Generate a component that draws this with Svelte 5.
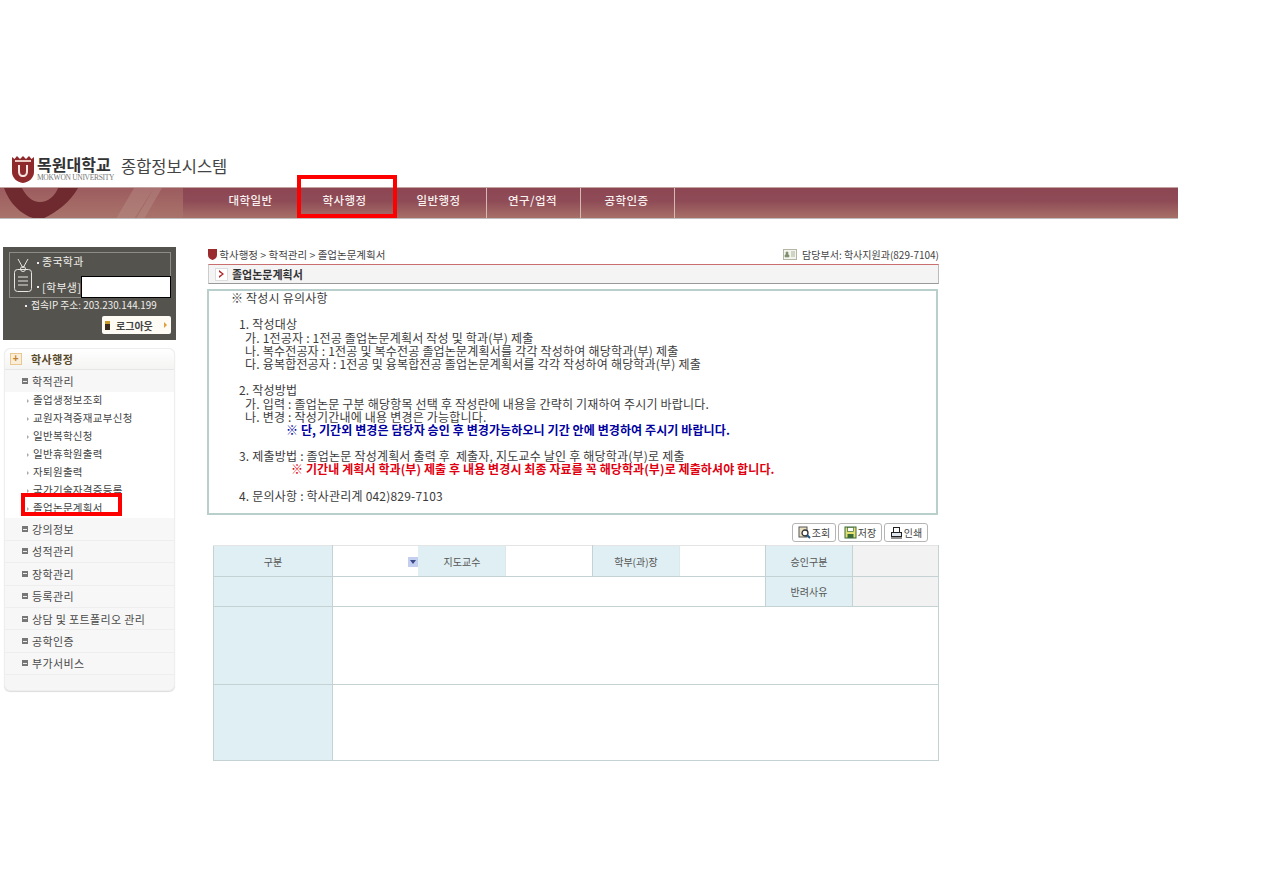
<script>
  const navItems = ['대학일반', '학사행정', '일반행정', '연구/업적', '공학인증'];
  const subMenu = ['졸업생정보조회', '교원자격증재교부신청', '일반복학신청', '일반휴학원출력', '자퇴원출력', '국가기술자격증등록', '졸업논문계획서'];
  const moreMenu = ['강의정보', '성적관리', '장학관리', '등록관리', '상담 및 포트폴리오 관리', '공학인증', '부가서비스'];

  // 안내문 한 줄씩, 빈 줄 포함
  const notice = [
    { t: '※ 작성시 유의사항', c: 'l0' },
    { t: '' },
    { t: '1. 작성대상', c: 'l1' },
    { t: '가. 1전공자 : 1전공 졸업논문계획서 작성 및 학과(부) 제출', c: 'l2' },
    { t: '나. 복수전공자 : 1전공 및 복수전공 졸업논문계획서를 각각 작성하여 해당학과(부) 제출', c: 'l2' },
    { t: '다. 융복합전공자 : 1전공 및 융복합전공 졸업논문계획서를 각각 작성하여 해당학과(부) 제출', c: 'l2' },
    { t: '' },
    { t: '2. 작성방법', c: 'l1' },
    { t: '가. 입력 : 졸업논문 구분 해당항목 선택 후 작성란에 내용을 간략히 기재하여 주시기 바랍니다.', c: 'l2' },
    { t: '나. 변경 : 작성기간내에 내용 변경은 가능합니다.', c: 'l2' },
    { t: '※ 단, 기간외 변경은 담당자 승인 후 변경가능하오니 기간 안에 변경하여 주시기 바랍니다.', c: 'blue' },
    { t: '' },
    { t: '3. 제출방법 : 졸업논문 작성계획서 출력 후  제출자, 지도교수 날인 후 해당학과(부)로 제출', c: 'l1' },
    { t: '※ 기간내 계획서 학과(부) 제출 후 내용 변경시 최종 자료를 꼭 해당학과(부)로 제출하셔야 합니다.', c: 'red' },
    { t: '' },
    { t: '4. 문의사항 : 학사관리계 042)829-7103', c: 'l1' }
  ];
</script>

<div class="page">
  <header class="logo">
    <svg class="emblem" width="22" height="27" viewBox="0 0 22 27">
      <path d="M0 1l2.500 2L5 0l3 3 3-3 3 3 3-3 2.500 3L22 1v15c0 6-5 10-11 11C5 26 0 22 0 16z" fill="#8f2a2c" />
      <path d="M3 4h16v2H3z" fill="#e8c8c0" />
      <path d="M6 9v6c0 4 2 6 5 6s5-2 5-6V9h-2v6c0 3-1 4-3 4s-3-1-3-4V9z" fill="#f3e4e0" />
    </svg>
    <div class="school">
      <strong>목원대학교</strong>
      <span>MOKWON UNIVERSITY</span>
    </div>
    <div class="system">종합정보시스템</div>
  </header>

  <nav class="nav">
    <div class="nav-left">
      <svg width="183" height="31" viewBox="0 0 183 31">
        <path d="M0 0h183v31H0z" fill="#a3685f" opacity=".35" />
        <path d="M4 0c6 18 22 30 34 31h4c12-5 28-16 36-31H58c-3 8-10 14-18 14S26 8 22 0z" fill="#6f2a30" />
        <path d="M116 31l18-31h20l-20 31zM136 31l18-31h8l-18 31z" fill="#b98f88" opacity=".45" />
      </svg>
    </div>
    <ul>
      {#each navItems as item, i}
        <li class:sep={i > 1}>{item}</li>
      {/each}
    </ul>
  </nav>

  <div class="body">
    <aside class="side">
      <section class="userbox">
        <div class="userinner">
          <svg class="badge" width="20" height="35" viewBox="0 0 20 35" fill="none" stroke="#e6e6e2">
            <path d="M5 1l5 9 5-9" />
            <circle cx="10" cy="11" r="2.500" />
            <rect x="1.500" y="11.500" width="17" height="22" rx="3" />
            <path d="M5 19h10M5 23h10M5 27h10" />
          </svg>
          <div class="userlines">
            <div>종국학과</div>
            <div class="userrow">[학부생]<span class="mask"></span></div>
          </div>
        </div>
        <div class="ip">접속IP 주소: 203.230.144.199</div>
        <div class="logout-wrap">
          <button class="logout"><i></i>로그아웃<b></b></button>
        </div>
      </section>

      <section class="menu">
        <h3>
          <span class="plus">+</span>학사행정
        </h3>
        <div class="item open"><i></i>학적관리</div>
        <ul>
          {#each subMenu as s}
            <li>{s}</li>
          {/each}
        </ul>
        {#each moreMenu as m}
          <div class="item"><i></i>{m}</div>
        {/each}
      </section>
    </aside>

    <main class="content">
      <div class="crumbs">
        <div class="path">
          <svg width="9" height="11" viewBox="0 0 9 11"><path d="M0 0h9v6c0 3-2 4-4.500 5C2 10 0 9 0 6z" fill="#9a2b2e" /></svg>
          학사행정 &gt; 학적관리 &gt; 졸업논문계획서
        </div>
        <div class="owner">
          <svg width="14" height="11" viewBox="0 0 14 11">
            <rect x=".5" y=".5" width="13" height="10" fill="#f4f4ee" stroke="#b5b5a5" />
            <path d="M2 8h4V6H5V3H3v3H2zM8 3h4M8 5h4M8 7h4" fill="#7a8a6a" stroke="#8a9a7a" stroke-width=".7" />
          </svg>
          담당부서: 학사지원과(829-7104)
        </div>
      </div>

      <div class="title">
        <span class="arrow">
          <svg width="7" height="8" viewBox="0 0 7 8"><path d="M1 0l5 4-5 4V6l3-2-3-2z" fill="#b02a2a" /></svg>
        </span>
        졸업논문계획서
      </div>

      <div class="notice">
        {#each notice as line}
          <div class="line {line.c ?? ''}">{line.t}</div>
        {/each}
      </div>

      <div class="buttons">
        <button>
          <svg width="13" height="13" viewBox="0 0 13 13" fill="none">
            <rect x="1" y="1" width="8" height="10" fill="#e8dfc0" stroke="#555" />
            <circle cx="7" cy="7" r="3" fill="#fff" stroke="#333" stroke-width="1.300" />
            <path d="M9 9l3 3" stroke="#1a5a8a" stroke-width="2" />
          </svg>조회
        </button>
        <button>
          <svg width="13" height="13" viewBox="0 0 13 13">
            <rect x="1" y="1" width="11" height="11" fill="#e3e070" stroke="#3a6a3a" />
            <rect x="3.500" y="1.500" width="6" height="4" fill="#fff" stroke="#3a6a3a" stroke-width=".7" />
            <rect x="3.500" y="8" width="6" height="4" fill="#3a6a3a" />
          </svg>저장
        </button>
        <button>
          <svg width="13" height="13" viewBox="0 0 13 13" fill="none" stroke="#222">
            <rect x="3.500" y="1.500" width="6" height="5" />
            <rect x="1.500" y="6.500" width="10" height="4" fill="#dfe6ee" />
            <path d="M1 12h11" />
          </svg>인쇄
        </button>
      </div>

      <table>
        <colgroup>
          <col class="c1" /><col class="c2" /><col class="c3" /><col class="c4" />
          <col class="c5" /><col class="c6" /><col class="c7" /><col class="c8" />
        </colgroup>
        <tbody>
          <tr class="r1">
            <th>구분</th>
            <td class="select"><span class="drop"></span></td>
            <th class="plain">지도교수</th>
            <td></td>
            <th class="plain">학부(과)장</th>
            <td></td>
            <th>승인구분</th>
            <td class="gray"></td>
          </tr>
          <tr class="r2">
            <th></th>
            <td colspan="5"></td>
            <th>반려사유</th>
            <td class="gray"></td>
          </tr>
          <tr class="r3">
            <th></th>
            <td colspan="7"></td>
          </tr>
          <tr class="r4">
            <th></th>
            <td colspan="7"></td>
          </tr>
        </tbody>
      </table>
    </main>
  </div>

  <!-- 캡처에 덧그려진 빨간 강조 상자 -->
  <div class="mark mark-nav"></div>
  <div class="mark mark-side"></div>
</div>

<style>
:global(body) {
  background: #fff;
}

.page {
  position: relative;
  width: 1263px;
  height: 893px;
  overflow: hidden;
  padding-top: 156px;
  box-sizing: border-box;
  font-family: "Noto Sans CJK KR", "Liberation Sans", sans-serif;
  font-size: 11px;
  color: #3a3a3a;
}

ul {
  list-style: none;
  margin: 0;
  padding: 0;
}

.logo {
  display: flex;
  height: 31px;
  padding-left: 12px;
  box-sizing: border-box;
}

.emblem {
  margin-right: 3px;
}

.school {
  width: 84px;
  display: flex;
  flex-direction: column;
}

.school strong {
  font-size: 16px;
  line-height: 17px;
  color: #333;
  white-space: nowrap;
}

.school span {
  font-family: "Liberation Serif", serif;
  font-size: 7.500px;
  line-height: 9px;
  color: #777;
  letter-spacing: -0.300px;
  white-space: nowrap;
}

.system {
  font-size: 16.500px;
  line-height: 20px;
  color: #444;
  white-space: nowrap;
}

.nav {
  display: flex;
  width: 1178px;
  height: 32px;
  box-sizing: border-box;
  border-top: 1px solid #c2a39f;
  border-bottom: 1px solid #bdbdbd;
  background: linear-gradient(#8c4653 0%, #8f4c57 45%, #a87068 100%);
}

.nav-left {
  width: 183px;
  height: 30px;
  margin-right: 22px;
  overflow: hidden;
  background: linear-gradient(#9a5660, #ac7a70);
}

.nav-left svg {
  display: block;
}

.nav ul {
  display: flex;
}

.nav li {
  width: 94px;
  padding-right: 2px;
  line-height: 25px;
  text-align: center;
  font-size: 11.500px;
  font-weight: 500;
  color: #f8f0ee;
  letter-spacing: 0.400px;
  box-sizing: border-box;
  border-right: 1px solid transparent;
}

.nav li.sep {
  border-right-color: #d8b8b4;
}

.body {
  display: flex;
  margin-top: 28px;
  padding-left: 3px;
}

.side {
  width: 173px;
  margin-right: 31px;
}

.userbox {
  height: 93px;
  margin-bottom: 8px;
  padding: 5px 5px 0 6px;
  box-sizing: border-box;
  background: #55534e;
  color: #eeeeea;
}

.userinner {
  display: flex;
  height: 46px;
  box-sizing: border-box;
  border: 1px solid #8d8c86;
  padding-left: 3px;
}

.badge {
  margin-top: 5px;
  margin-right: 4px;
}

.userlines {
  flex: 1;
  font-size: 11px;
  letter-spacing: 0.300px;
  line-height: 16px;
}

.userlines > div::before {
  content: "";
  display: inline-block;
  width: 2px;
  height: 2px;
  margin: 0 3px 2px 0;
  background: #eee;
}

.userrow {
  display: flex;
  align-items: center;
  margin-top: 7px;
  margin-right: -1px;
  white-space: nowrap;
}

.userrow::before {
  flex: none;
  margin-bottom: 0 !important;
}

.mask {
  flex: 1;
  height: 22px;
  box-sizing: border-box;
  background: #fff;
  border: 1px solid #000;
}

.ip {
  padding-left: 21px;
  font-size: 9.800px;
  line-height: 14px;
  white-space: nowrap;
}

.ip::before {
  content: "";
  display: inline-block;
  width: 2px;
  height: 2px;
  margin: 0 4px 2px -5px;
  background: #eee;
}

.logout-wrap {
  display: flex;
  justify-content: flex-end;
  margin-top: 4px;
}

.logout {
  display: flex;
  align-items: center;
  width: 69px;
  height: 18px;
  padding: 0 4px 0 3px;
  border: 0;
  border-radius: 2px;
  background: #fdfbf3;
  font: 700 10px "Noto Sans CJK KR", sans-serif;
  color: #444;
}

.logout i {
  width: 5px;
  height: 9px;
  margin-right: 6px;
  background: linear-gradient(#c89a2a 35%, #3a2c1c 35%);
}

.logout b {
  width: 0;
  height: 0;
  margin-left: auto;
  border-left: 3px solid #e0a040;
  border-top: 3px solid transparent;
  border-bottom: 3px solid transparent;
}

.menu {
  width: 171px;
  height: 343px;
  margin-left: 1px;
  box-sizing: border-box;
  border: 1px solid #eee;
  border-radius: 6px;
  background: #f6f6f6;
  box-shadow: 0 1px 1px #ddd;
}

.menu h3 {
  display: flex;
  align-items: center;
  height: 20px;
  margin: 0;
  padding-left: 5px;
  font-size: 11px;
  font-weight: 700;
  color: #5a4a2a;
  letter-spacing: 0.500px;
  background: linear-gradient(#fff, #f4f4f2);
  border-bottom: 1px solid #e6e6e6;
  border-radius: 6px 6px 0 0;
}

.plus {
  width: 12px;
  height: 12px;
  margin-right: 9px;
  box-sizing: border-box;
  border: 1px solid #e8c890;
  background: #fbeed8;
  color: #c08030;
  font: 700 10px/10px "Liberation Sans", sans-serif;
  text-align: center;
}

.item {
  display: flex;
  align-items: center;
  height: 22.400px;
  padding-left: 17px;
  box-sizing: border-box;
  background: #f7f7f7;
  border-bottom: 1px solid #eeeeee;
  font-size: 11px;
  color: #4a4a4a;
  letter-spacing: 0.350px;
  white-space: nowrap;
}

.item.open {
  border-bottom: 0;
}

.item i {
  position: relative;
  width: 6px;
  height: 6px;
  margin-right: 4px;
  background: #777;
}

.item i::after {
  content: "";
  position: absolute;
  left: 1px;
  top: 2.500px;
  width: 4px;
  height: 1px;
  background: #eee;
}

.menu ul {
  height: 126px;
  box-sizing: border-box;
  background: #fff;
}

.menu li {
  height: 18px;
  padding-left: 28px;
  position: relative;
  font-size: 10.500px;
  line-height: 16px;
  color: #444;
  letter-spacing: 0.300px;
  white-space: nowrap;
}

.menu li::before {
  content: "";
  position: absolute;
  left: 27px;
  top: 7px;
  border-left: 2px solid #aaa;
  border-top: 2px solid transparent;
  border-bottom: 2px solid transparent;
  transform: translateX(-5px);
}

.content {
  width: 733px;
}

.crumbs {
  display: flex;
  justify-content: space-between;
  height: 17px;
  padding: 0 1px;
  line-height: 15px;
  color: #444;
}

.path {
  font-size: 10.500px;
}

.owner {
  font-size: 10px;
}

.path svg {
  margin-bottom: -1px;
}

.owner svg {
  margin-right: 3px;
  margin-bottom: -1px;
}

.title {
  display: flex;
  align-items: center;
  height: 20px;
  margin-left: 1px;
  width: 731px;
  box-sizing: border-box;
  border-top: 1px solid #c96f6f;
  border-bottom: 1px solid #999;
  border-left: 1px solid #ccc;
  border-right: 1px solid #bbb;
  background: #f5f4f4;
  font-size: 11px;
  font-weight: 700;
  color: #333;
}

.arrow {
  display: flex;
  align-items: center;
  justify-content: center;
  width: 11px;
  height: 11px;
  margin: 0 4px 0 6px;
  background: #fff;
  border: 1px solid #ddd;
}

.notice {
  width: 731px;
  height: 226px;
  margin-top: 5px;
  box-sizing: border-box;
  border: 2px solid #b9cfcc;
}

.line {
  height: 13.200px;
  font-size: 12px;
  letter-spacing: 0.200px;
  line-height: 13.200px;
  white-space: pre;
  color: #3c3c3c;
}

.l0 {
  padding-left: 22px;
}

.l1 {
  padding-left: 30px;
}

.l2 {
  padding-left: 36px;
}

.blue {
  padding-left: 77px;
  color: #0000a0;
  font-weight: 700;
  letter-spacing: 0.100px;
}

.red {
  padding-left: 82px;
  color: #e00010;
  font-weight: 700;
  letter-spacing: 0.100px;
}

.buttons {
  display: flex;
  gap: 2px;
  justify-content: flex-end;
  height: 19px;
  margin-top: 8px;
  padding-right: 12px;
}

.buttons button {
  display: flex;
  align-items: center;
  justify-content: center;
  gap: 1px;
  width: 44px;
  height: 19px;
  padding: 0;
  border: 1px solid #b5b5b5;
  border-radius: 3px;
  background: #fff;
  font: 10px "Noto Sans CJK KR", sans-serif;
  color: #444;
}

table {
  width: 725px;
  margin: 3px 0 0 6px;
  border-collapse: collapse;
  table-layout: fixed;
  font-size: 10px;
  color: #555;
}

.c1 { width: 119px; }
.c2 { width: 86px; }
.c3 { width: 87px; }
.c4 { width: 87px; }
.c5 { width: 87px; }
.c6 { width: 86px; }
.c7 { width: 87px; }
.c8 { width: 86px; }

th, td {
  padding: 0;
  border: 1px solid #c4d2d4;
  border-top-color: #c4cccc;
}

th {
  background: #e0eff3;
  font-weight: 400;
  text-align: center;
}

th.plain {
  border-top-color: #e8e8e8;
  border-left-color: #e0eff3;
  border-right-color: #dce8ea;
}

td.gray {
  background: #f2f2f2;
}

td.select {
  position: relative;
  border-right: 0;
}

.r1 th, .r1 td {
  border-top-color: #e4e4e4;
}

.r1 { height: 31px; }
.r2 { height: 30px; }
.r3 { height: 78px; }
.r4 { height: 76px; }

.drop {
  position: absolute;
  right: 0;
  top: 11px;
  width: 10px;
  height: 10px;
  background: #c4cff0;
}

.drop::after {
  content: "";
  position: absolute;
  left: 2px;
  top: 3px;
  border-top: 4px solid #3a4a8a;
  border-left: 3px solid transparent;
  border-right: 3px solid transparent;
}

.mark {
  position: absolute;
  box-sizing: border-box;
  border: 4px solid #f00;
}

.mark-nav {
  left: 297px;
  top: 175px;
  width: 100px;
  height: 43px;
}

.mark-side {
  left: 21px;
  top: 493px;
  width: 101px;
  height: 23px;
}
</style>
